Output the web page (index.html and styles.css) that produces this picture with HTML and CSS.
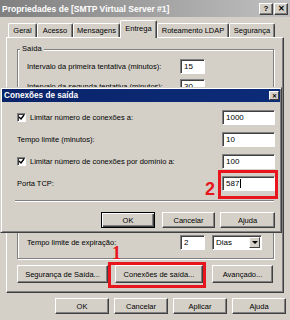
FILE: index.html
```html
<!DOCTYPE html>
<html lang="pt">
<head>
  <meta charset="UTF-8">
  <title>Propriedades de [SMTP Virtual Server #1]</title>
  <link rel="stylesheet" href="styles.css">
</head>
<body>
<div class="window">
  <div class="titlebar">
    <span class="title">Propriedades de [SMTP Virtual Server #1]</span>
    <span class="cap-btn">?</span>
    <span class="cap-btn">&#10005;</span>
  </div>

  <div class="tabs">
    <span class="tab t-geral">Geral</span>
    <span class="tab t-acesso">Acesso</span>
    <span class="tab t-msg">Mensagens</span>
    <span class="tab t-entrega active">Entrega</span>
    <span class="tab t-ldap">Roteamento LDAP</span>
    <span class="tab t-seg">Segurança</span>
  </div>

  <div class="panel">
    <div class="group">
      <span class="legend">Saída</span>
      <div class="row">
        <span class="label">Intervalo da primeira tentativa (minutos):</span>
        <span class="field">15</span>
      </div>
      <div class="row">
        <span class="label">Intervalo da segunda tentativa (minutos):</span>
        <span class="field">30</span>
      </div>
      <div class="row expire">
        <span class="label">Tempo limite de expiração:</span>
        <span class="field">2</span>
        <span class="select">Dias<span class="drop"></span></span>
      </div>
    </div>

    <div class="panel-btns">
      <span class="btn b-seg">Segurança de Saída...</span>
      <span class="btn b-con">Conexões de saída...</span>
      <span class="btn b-adv">Avançado...</span>
    </div>
  </div>

  <div class="footer">
    <span class="btn f-btn">OK</span>
    <span class="btn f-btn">Cancelar</span>
    <span class="btn f-btn">Aplicar</span>
    <span class="btn f-btn">Ajuda</span>
  </div>

  <!-- janela de dialogo por cima -->
  <div class="dialog">
    <div class="dlg-title">
      <span class="title">Conexões de saída</span>
      <span class="dlg-close">&#10005;</span>
    </div>
    <div class="dlg-body">
      <div class="drow">
        <span class="check"><svg width="7" height="7" viewBox="0 0 7 7"><path d="M1 3 L3 5 L6 1" fill="none" stroke="#000" stroke-width="1.4"/></svg></span>
        <span class="dlabel">Limitar número de conexões a:</span>
        <span class="field wide">1000</span>
      </div>
      <div class="drow">
        <span class="dlabel">Tempo limite (minutos):</span>
        <span class="field wide">10</span>
      </div>
      <div class="drow">
        <span class="check"><svg width="7" height="7" viewBox="0 0 7 7"><path d="M1 3 L3 5 L6 1" fill="none" stroke="#000" stroke-width="1.4"/></svg></span>
        <span class="dlabel">Limitar número de conexões por domínio a:</span>
        <span class="field wide">100</span>
      </div>
      <div class="drow">
        <span class="dlabel">Porta TCP:</span>
        <span class="field wide">587<span class="caret"></span></span>
      </div>
      <div class="sep"></div>
      <div class="dlg-btns">
        <span class="btn d-btn default">OK</span>
        <span class="btn d-btn">Cancelar</span>
        <span class="btn d-btn">Ajuda</span>
      </div>
    </div>
  </div>

  <!-- marcacoes em vermelho -->
  <span class="mark num-2">2</span>
  <span class="mark box-2"></span>
  <span class="mark num-1">1</span>
  <span class="mark box-1"></span>
</div>
</body>
</html>
```

FILE: styles.css
```css
*{
  margin:0;
  padding:0;
  box-sizing:border-box;
}
body{
  background:#d4d0c8;
  font-family:"Liberation Sans", Arial, sans-serif;
  font-size:7.5px;
  color:#000;
}
.window{
  position:relative;
  width:290px;
  height:320px;
  overflow:hidden;
  background:#d4d0c8;
}

/* barra de titulo */
.titlebar{
  height:17px;
  display:flex;
  align-items:center;
  padding:0 2px 0 2px;
  background:linear-gradient(to right,#808080,#c0c0c0);
}
.title{
  flex:1;
  color:#fff;
  font-weight:bold;
  font-size:8.5px;
  white-space:nowrap;
}
.cap-btn{
  width:14px;
  height:12px;
  margin-left:1px;
  display:flex;
  align-items:center;
  justify-content:center;
  font-weight:bold;
  font-size:8px;
  background:#d4d0c8;
  border:1px solid;
  border-color:#fff #404040 #404040 #fff;
  box-shadow:inset -1px -1px 0 #808080;
}

/* abas */
.tabs{
  display:flex;
  align-items:flex-end;
  height:17px;
  margin-top:3px;
  padding-left:8px;
}
.tab{
  height:14px;
  display:flex;
  align-items:center;
  justify-content:center;
  border-top:1px solid #fff;
  border-left:1px solid #fff;
  border-right:1px solid #404040;
  box-shadow:inset -1px 0 0 #808080;
  border-radius:2px 2px 0 0;
  white-space:nowrap;
}
.tab.active{
  height:18px;
  margin-bottom:-1px;
  position:relative;
  z-index:1;
  background:#d4d0c8;
  padding-bottom:2px;
}
.t-geral{ width:29px; }
.t-acesso{ width:36px; }
.t-msg{ width:47px; }
.t-entrega{ width:37px; }
.t-ldap{ width:72px; }
.t-seg{ width:46px; }

.panel{
  margin-left:6px;
  width:278px;
  height:256px;
  padding:11px 0 0 10px;
  border:1px solid;
  border-color:#fff #404040 #404040 #fff;
  box-shadow:inset -1px -1px 0 #808080;
}

.group{
  width:257px;
  border:1px solid #808080;
  box-shadow:1px 1px 0 #fff, inset 1px 1px 0 #fff;
  padding:0 0 8px 9px;
}
.legend{
  display:block;
  width:fit-content;
  margin:-6px 0 0 -7px;
  padding:0 2px;
  line-height:10px;
  background:#d4d0c8;
}
.row{
  display:flex;
  align-items:center;
  height:15px;
  margin-top:5px;
}
.row.expire{
  margin-top:141px;
}
.label{
  width:153px;
  white-space:nowrap;
}

/* campos afundados */
.field{
  width:25px;
  height:15px;
  display:flex;
  align-items:center;
  padding-left:3px;
  background:#fff;
  border:1px solid;
  border-color:#808080 #fff #fff #808080;
  box-shadow:inset 1px 1px 0 #404040;
  font-size:8px;
}
.field.wide{
  width:53px;
}
.caret{
  width:1px;
  height:9px;
  margin-left:1px;
  background:#000;
}
.select{
  width:50px;
  height:15px;
  margin-left:7px;
  display:flex;
  align-items:center;
  justify-content:space-between;
  padding:0 1px 0 3px;
  background:#fff;
  border:1px solid;
  border-color:#808080 #fff #fff #808080;
  box-shadow:inset 1px 1px 0 #404040;
  font-size:8px;
}
.drop{
  width:11px;
  height:11px;
  display:flex;
  align-items:center;
  justify-content:center;
  background:#d4d0c8;
  border:1px solid;
  border-color:#fff #404040 #404040 #fff;
}
.drop::after{
  content:"";
  border-left:3px solid transparent;
  border-right:3px solid transparent;
  border-top:3px solid #000;
}

/* botoes */
.btn{
  display:flex;
  align-items:center;
  justify-content:center;
  white-space:nowrap;
  background:#d4d0c8;
  border:1px solid;
  border-color:#fff #404040 #404040 #fff;
  box-shadow:inset -1px -1px 0 #808080;
}
.panel-btns{
  display:flex;
  margin-top:6px;
}
.panel-btns .btn{ height:18px; }
.b-seg{ width:91px; }
.b-con{ width:88px; margin-left:7px; }
.b-adv{ width:61px; margin-left:9px; }

.footer{
  display:flex;
  justify-content:flex-end;
  gap:5px;
  padding-right:4px;
  margin-top:5px;
}
.f-btn{
  width:54px;
  height:16px;
}

/* dialogo Conexoes de saida */
.dialog{
  position:absolute;
  left:0;
  top:87px;
  width:282px;
  padding:1px;
  background:#d4d0c8;
  border:1px solid;
  border-color:#d4d0c8 #404040 #404040 #d4d0c8;
  box-shadow:inset 1px 1px 0 #fff, inset -1px -1px 0 #808080;
  z-index:2;
}
.dlg-title{
  height:13px;
  display:flex;
  align-items:center;
  padding:0 1px 0 2px;
  background:linear-gradient(to right,#0a246a,#0c2b78);
}
.dlg-title .title{
  font-size:8.2px;
}
.dlg-close{
  width:10px;
  height:9px;
  display:flex;
  align-items:center;
  justify-content:center;
  font-size:6px;
  font-weight:bold;
  background:#d4d0c8;
  border:1px solid;
  border-color:#fff #404040 #404040 #fff;
}
.dlg-body{
  padding:8px 5px 2px 15px;
}
.drow{
  display:flex;
  align-items:center;
  height:15px;
  margin-bottom:7px;
}
.drow:nth-child(4){
  margin-bottom:0;
}
.check{
  width:9px;
  height:9px;
  margin-right:4px;
  display:flex;
  align-items:center;
  justify-content:center;
  background:#fff;
  border:1px solid;
  border-color:#808080 #fff #fff #808080;
  box-shadow:inset 1px 1px 0 #404040;
}
.dlabel{
  flex:1;
  white-space:nowrap;
}
.sep{
  height:2px;
  margin:9px 1px 0 -2px;
  border-top:1px solid #808080;
  border-bottom:1px solid #fff;
}
.dlg-btns{
  display:flex;
  justify-content:flex-end;
  margin-top:10px;
  margin-bottom:1px;
}
.d-btn{
  height:16px;
  width:53px;
}
.d-btn.default{
  width:54px;
  border-color:#000;
  box-shadow:inset 1px 1px 0 #fff, inset -1px -1px 0 #404040, inset -2px -2px 0 #808080;
}
.d-btn:nth-child(2){ margin-left:7px; }
.d-btn:nth-child(3){ margin-left:5px; width:55px; }

/* marcacoes */
.mark{
  position:absolute;
  z-index:3;
  color:#e8161c;
  font-weight:bold;
  line-height:1;
}
.num-2{
  left:205px;
  top:180px;
  font-size:18px;
  font-family:"Liberation Sans", Arial, sans-serif;
}
.num-1{
  left:112px;
  top:244px;
  font-size:18px;
  font-family:"Liberation Serif", "Times New Roman", serif;
}
.box-2{
  left:218px;
  top:170px;
  width:60px;
  height:29px;
  border:3px solid #e8161c;
}
.box-1{
  left:108px;
  top:262px;
  width:98px;
  height:26px;
  border:3px solid #e8161c;
}
```
